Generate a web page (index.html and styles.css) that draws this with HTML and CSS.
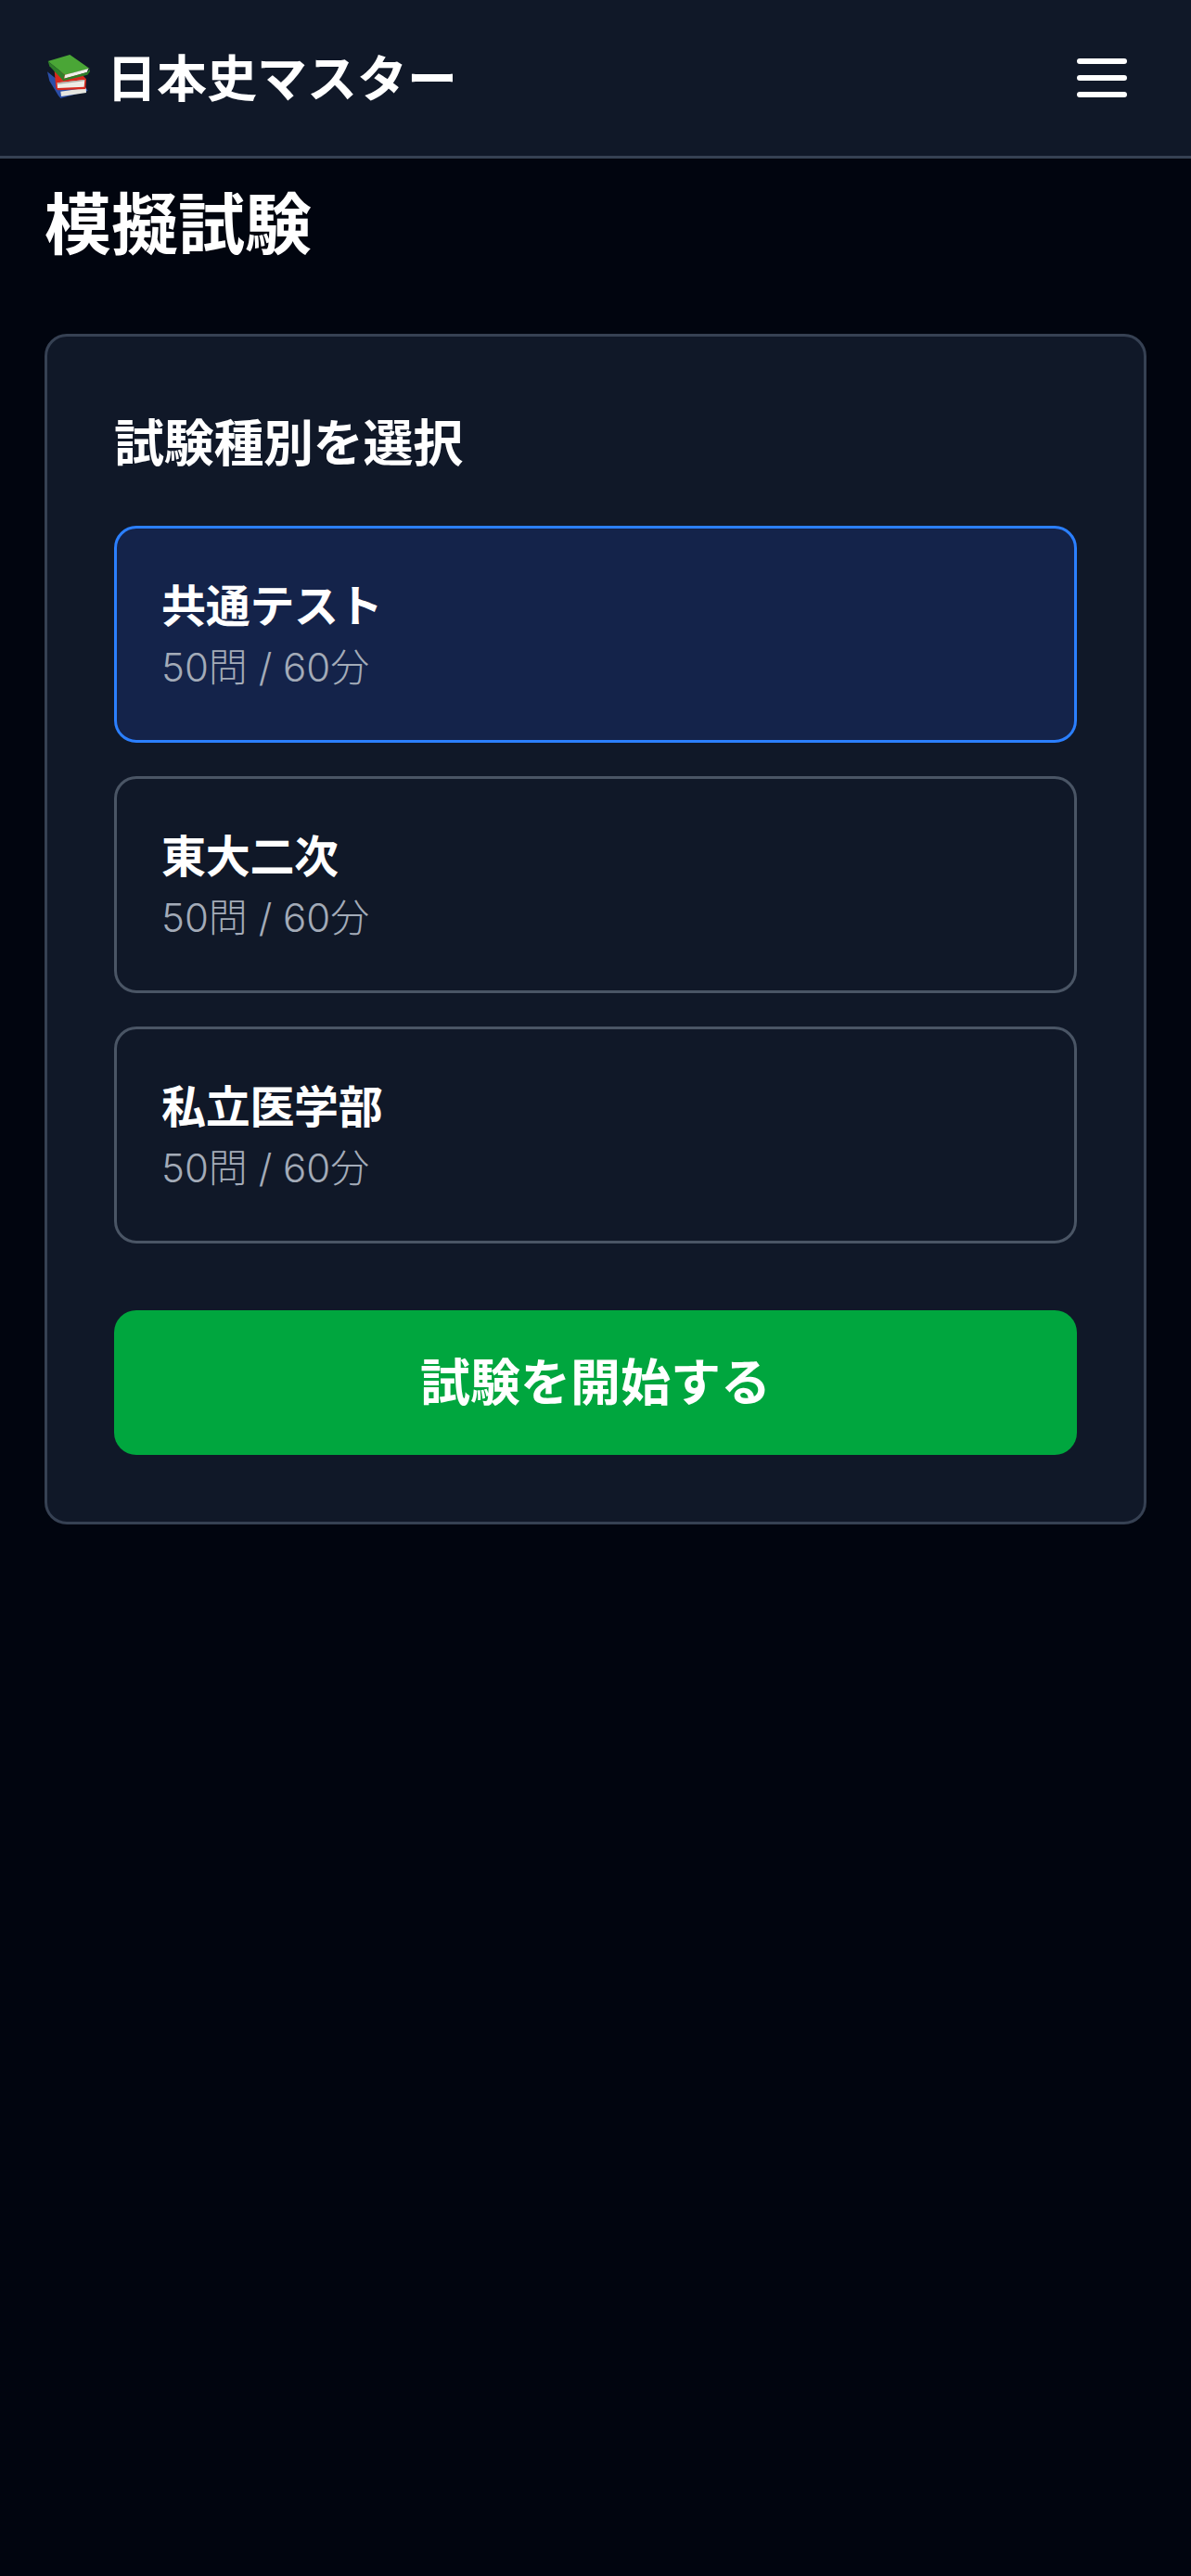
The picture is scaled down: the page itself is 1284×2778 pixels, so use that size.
FILE: index.html
```html
<!DOCTYPE html>
<html lang="ja">
<head>
    <meta charset="UTF-8">
    <title>模擬試験 | 日本史マスター</title>
    <link rel="stylesheet" href="styles.css">
</head>
<body>
    <header class="site-header">
        <a class="logo" href="#">
            <svg class="logo-icon" viewBox="6 9 162 162" aria-hidden="true">
                <!-- blue book -->
                <path d="M15 70 L40 90 L140 122 L146 132 L58 156 L50 146 L22 100 Z" fill="#2a4ea8"/>
                <path d="M58 134 L140 122 L141 138 L60 150 Z" fill="#e6e6e0"/>
                <!-- red book -->
                <path d="M38 66 L128 80 L141 94 L139 126 L48 130 L43 124 Z" fill="#d62a1e"/>
                <path d="M47 106 L136 96 L134 119 L48 123 Z" fill="#eeede6"/>
                <path d="M47 106 L136 96 L134 100 L48 111 Z" fill="#b3b3ac"/>
                <!-- green book -->
                <path d="M17 36 L88 15 L152 60 L72 80 Z" fill="#4aa636"/>
                <path d="M17 36 L72 80 L66 98 L22 52 Z" fill="#2e7f29"/>
                <path d="M72 80 L148 60 L143 72 L70 92 Z" fill="#f0efe8"/>
                <path d="M66 93 L143 72 L152 62 L153 70 L145 80 L66 100 Z" fill="#2e7f29"/>
            </svg>
            <span class="logo-text">日本史マスター</span>
        </a>
        <button class="menu-btn" type="button" aria-label="メニュー">
            <svg viewBox="0 0 24 24" fill="none" stroke="#fff" stroke-width="2" stroke-linecap="round">
                <path d="M4 6h16M4 12h16M4 18h16"/>
            </svg>
        </button>
    </header>

    <main class="page">
        <h1 class="page-title">模擬試験</h1>

        <section class="card">
            <h2 class="card-title">試験種別を選択</h2>

            <div class="exam-list">
                <button class="exam-option selected" type="button">
                    <span class="exam-name">共通テスト</span>
                    <span class="exam-meta">50問 / 60分</span>
                </button>
                <button class="exam-option" type="button">
                    <span class="exam-name">東大二次</span>
                    <span class="exam-meta">50問 / 60分</span>
                </button>
                <button class="exam-option" type="button">
                    <span class="exam-name">私立医学部</span>
                    <span class="exam-meta">50問 / 60分</span>
                </button>
            </div>

            <button class="start-btn" type="button">試験を開始する</button>
        </section>
    </main>
</body>
</html>
```

FILE: styles.css
```css
* { box-sizing: border-box; }

body {
    margin: 0;
    min-height: 2778px;
    background: #01050f;
    color: #fff;
    font-family: Inter, "Noto Sans CJK JP", sans-serif;
}

button { font-family: inherit; color: inherit; cursor: pointer; }

/* header */
.site-header {
    display: flex;
    align-items: center;
    justify-content: space-between;
    height: 171px;
    padding: 0 60px 0 48px;
    background: #101828;
    border-bottom: 3px solid #364153;
}
.logo {
    display: flex;
    align-items: center;
    gap: 13px;
    color: #fff;
    text-decoration: none;
    font-size: 54px;
    line-height: 84px;
    font-weight: 700;
}
.logo-icon { width: 54px; height: 54px; }
.logo-text { padding-top: 4px; }
.menu-btn {
    width: 72px;
    height: 72px;
    padding: 0;
    background: none;
    border: 0;
}
.menu-btn svg { display: block; width: 72px; height: 72px; }

/* page */
.page { padding: 23px 48px 0; }
.page-title {
    margin: 0 0 70px;
    font-size: 72px;
    line-height: 96px;
    font-weight: 700;
}

.card {
    padding: 72px;
    background: #101828;
    border: 3px solid #364153;
    border-radius: 24px;
}
.card-title {
    margin: 0 0 46px;
    padding-top: 2px;
    font-size: 54px;
    line-height: 84px;
    font-weight: 700;
    letter-spacing: -0.3px;
}

.exam-list {
    display: flex;
    flex-direction: column;
    gap: 36px;
    margin-bottom: 72px;
}
.exam-option {
    display: block;
    width: 100%;
    padding: 48px;
    text-align: left;
    background: transparent;
    border: 3px solid #4a5565;
    border-radius: 24px;
}
.exam-option.selected {
    background: #14234a;
    border-color: #2b7fff;
}
.exam-name {
    display: block;
    font-size: 48px;
    line-height: 72px;
    font-weight: 700;
    letter-spacing: -0.3px;
}
.exam-meta {
    display: block;
    font-size: 42px;
    line-height: 60px;
    font-weight: 300;
    word-spacing: 0;
    color: #a3abb8;
}

.start-btn {
    display: block;
    width: 100%;
    padding: 37px 36px 35px;
    background: #00a63e;
    border: 0;
    border-radius: 24px;
    font-size: 54px;
    line-height: 84px;
    font-weight: 700;
}
```
